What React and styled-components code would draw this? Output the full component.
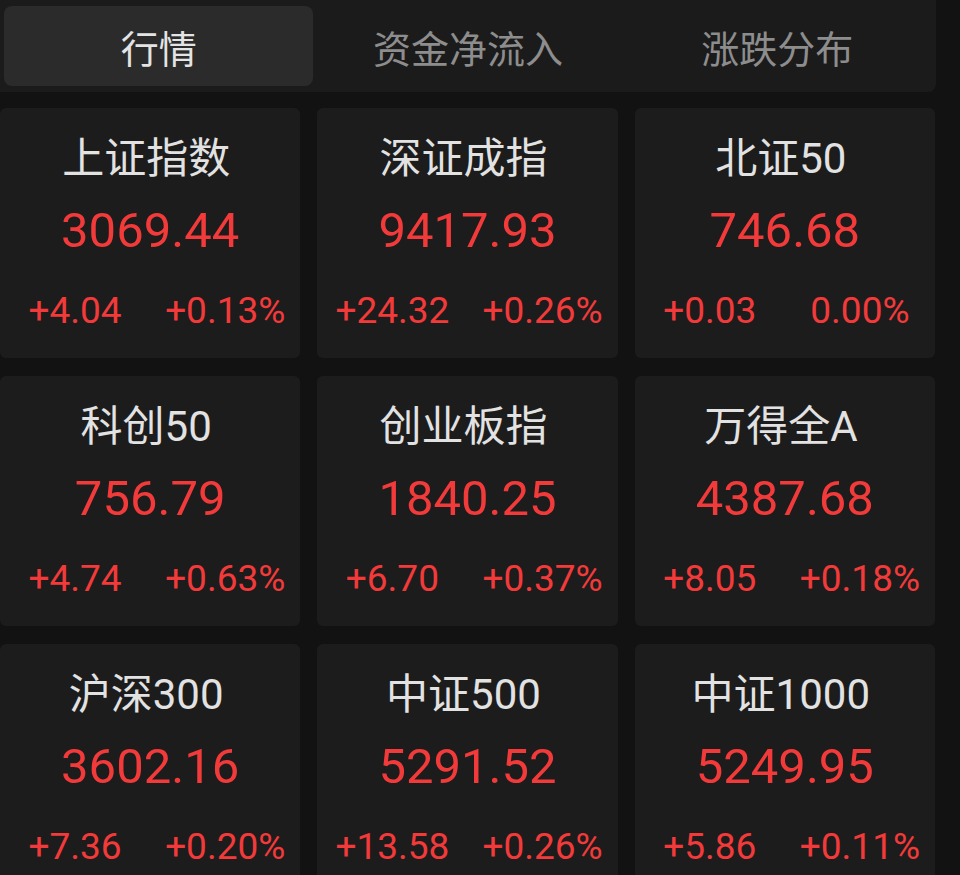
import React, { useState } from 'react';
import styled, { createGlobalStyle } from 'styled-components';

const GlobalStyle = createGlobalStyle`
  html, body {
    margin: 0;
    padding: 0;
    background: #121212;
    overflow: hidden;
  }
  body {
    font-family: Roboto, "Noto Sans CJK SC", sans-serif;
  }
`;

const indices = [
  { name: '上证指数', value: '3069.44', change: '+4.04', pct: '+0.13%' },
  { name: '深证成指', value: '9417.93', change: '+24.32', pct: '+0.26%' },
  { name: '北证50', value: '746.68', change: '+0.03', pct: '0.00%' },
  { name: '科创50', value: '756.79', change: '+4.74', pct: '+0.63%' },
  { name: '创业板指', value: '1840.25', change: '+6.70', pct: '+0.37%' },
  { name: '万得全A', value: '4387.68', change: '+8.05', pct: '+0.18%' },
  { name: '沪深300', value: '3602.16', change: '+7.36', pct: '+0.20%' },
  { name: '中证500', value: '5291.52', change: '+13.58', pct: '+0.26%' },
  { name: '中证1000', value: '5249.95', change: '+5.86', pct: '+0.11%' },
];

const tabs = ['行情', '资金净流入', '涨跌分布'];

const Page = styled.div`
  width: 960px;
  height: 875px;
  overflow: hidden;
  background: #121212;
`;

const TabBar = styled.div`
  width: 936px;
  box-sizing: border-box;
  display: flex;
  padding: 6px 4px;
  background: #1b1b1b;
  border-radius: 0 0 8px 0;
`;

const Tab = styled.div`
  flex: 1;
  height: 80px;
  display: flex;
  align-items: center;
  justify-content: center;
  border-radius: 8px;
  font-size: 38px;
  background: ${p => (p.$active ? '#2b2b2b' : 'transparent')};
  color: ${p => (p.$active ? '#e4e4e4' : '#8d8d8d')};
  cursor: pointer;
`;

const Grid = styled.div`
  width: 935px;
  margin-top: 16px;
  display: grid;
  grid-template-columns: repeat(3, 1fr);
  column-gap: 17px;
  row-gap: 18px;
`;

const Card = styled.div`
  height: 250px;
  background: #1c1c1c;
  border-radius: 6px;
  display: flex;
  flex-direction: column;
  align-items: center;
  padding-top: 26px;
  box-sizing: border-box;
`;

const Name = styled.div`
  height: 50px;
  line-height: 50px;
  font-size: 42px;
  color: #e2e2e2;
  margin-right: 8px;
`;

const Value = styled.div`
  margin-top: 18px;
  height: 58px;
  line-height: 58px;
  font-size: 49px;
  color: #f33a3a;
`;

const ChangeRow = styled.div`
  margin-top: 29px;
  width: 100%;
  display: grid;
  grid-template-columns: 1fr 1fr;
`;

const Change = styled.div`
  text-align: center;
  height: 44px;
  line-height: 44px;
  font-size: 37px;
  color: #f33a3a;
`;

export default function App() {
  const [active, setActive] = useState(0);
  return (
    <Page>
      <GlobalStyle />
      <TabBar>
        {tabs.map((t, i) => (
          <Tab key={t} $active={i === active} onClick={() => setActive(i)}>
            {t}
          </Tab>
        ))}
      </TabBar>
      <Grid>
        {indices.map(item => (
          <Card key={item.name}>
            <Name>{item.name}</Name>
            <Value>{item.value}</Value>
            <ChangeRow>
              <Change>{item.change}</Change>
              <Change>{item.pct}</Change>
            </ChangeRow>
          </Card>
        ))}
      </Grid>
    </Page>
  );
}
